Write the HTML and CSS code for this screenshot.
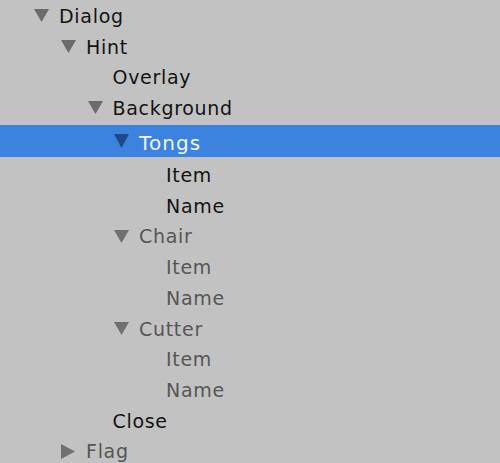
FILE: index.html
```html
<!DOCTYPE html>
<html>
<head>
<meta charset="utf-8">
<link rel="stylesheet" href="styles.css">
</head>
<body>
<div class="tree">
  <div class="row l0"><span class="tog"><svg width="15" height="13" viewBox="0 0 15 13"><polygon points="0,0 15,0 7.5,13"/></svg></span><span class="label">Dialog</span></div>
  <div class="row l1"><span class="tog"><svg width="15" height="13" viewBox="0 0 15 13"><polygon points="0,0 15,0 7.5,13"/></svg></span><span class="label">Hint</span></div>
  <div class="row l2"><span class="tog"></span><span class="label">Overlay</span></div>
  <div class="row l2"><span class="tog"><svg width="15" height="13" viewBox="0 0 15 13"><polygon points="0,0 15,0 7.5,13"/></svg></span><span class="label">Background</span></div>
  <div class="row l3 selected"><span class="tog"><svg width="15" height="14" viewBox="0 0 15 14"><polygon points="0,0 15,0 7.5,14"/></svg></span><span class="label">Tongs</span></div>
  <div class="row l4"><span class="tog"></span><span class="label">Item</span></div>
  <div class="row l4"><span class="tog"></span><span class="label">Name</span></div>
  <div class="row l3 off"><span class="tog"><svg width="15" height="13" viewBox="0 0 15 13"><polygon points="0,0 15,0 7.5,13"/></svg></span><span class="label">Chair</span></div>
  <div class="row l4 off"><span class="tog"></span><span class="label">Item</span></div>
  <div class="row l4 off"><span class="tog"></span><span class="label">Name</span></div>
  <div class="row l3 off"><span class="tog"><svg width="15" height="13" viewBox="0 0 15 13"><polygon points="0,0 15,0 7.5,13"/></svg></span><span class="label">Cutter</span></div>
  <div class="row l4 off"><span class="tog"></span><span class="label">Item</span></div>
  <div class="row l4 off"><span class="tog"></span><span class="label">Name</span></div>
  <div class="row l2"><span class="tog"></span><span class="label">Close</span></div>
  <div class="row l1 off"><span class="tog"><svg width="14" height="15" viewBox="0 0 14 15"><polygon points="0,0 14,7.5 0,15"/></svg></span><span class="label">Flag</span></div>
</div>
</body>
</html>
```

FILE: styles.css
```css
html, body {
  margin: 0;
  padding: 0;
  background: #c2c2c2;
  width: 500px;
  height: 463px;
  overflow: hidden;
}

.tree {
  display: flex;
  flex-direction: column;
  padding-top: 0.5px;
  font-family: "DejaVu Sans", "Liberation Sans", sans-serif;
  font-size: 19px;
  letter-spacing: 0.7px;
  color: #141414;
}

.row {
  display: flex;
  align-items: center;
  height: 30.7px;
  flex: none;
  white-space: nowrap;
}

.l0 { padding-left: 34px; }
.l1 { padding-left: 61px; }
.l2 { padding-left: 87.5px; }
.l3 { padding-left: 114px; }
.l4 { padding-left: 141px; }

.tog {
  width: 25px;
  flex: none;
  display: flex;
  align-items: center;
}

.tog svg {
  display: block;
  fill: #6b6b6b;
}

.label {
  line-height: 1;
  padding-top: 1px;
}

.off {
  color: #565656;
}

.off .tog svg {
  fill: #707070;
}

.selected {
  height: 32px;
  margin-top: 1.3px;
  margin-bottom: 3.2px;
  background: #3b83df;
  color: #f2f6ff;
  font-size: 20px;
  letter-spacing: 1.1px;
}

.selected .tog svg {
  fill: #1d4a86;
}

.selected .label {
  padding-top: 4px;
}
```
